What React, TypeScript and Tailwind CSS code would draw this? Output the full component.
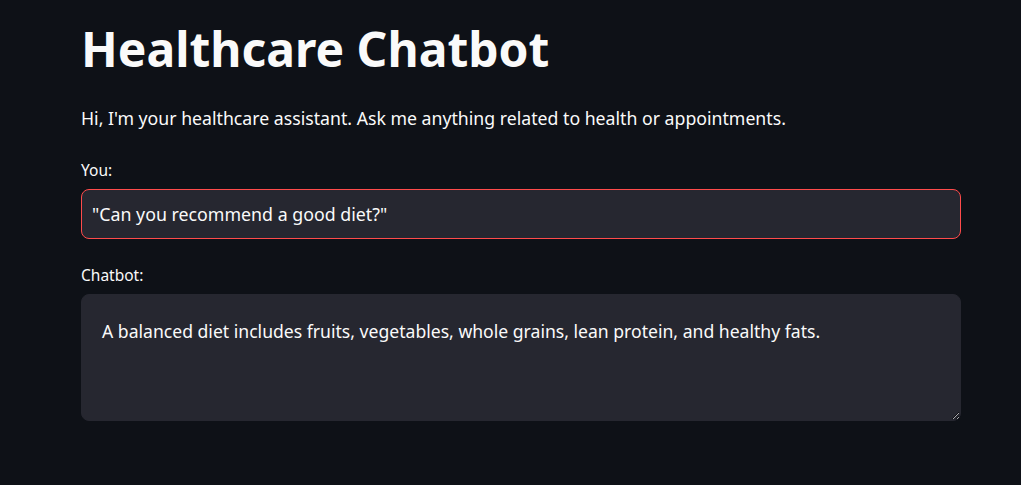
export default function App() {
  return (
    <div className="min-h-[485px] w-full bg-[#0e1117] text-[#fafafa] font-['Noto_Sans',sans-serif]">
      <div className="ml-[81px] w-[880px] pt-[20px]">
        <h1 className="text-[48px] font-bold leading-[58px]">Healthcare Chatbot</h1>

        <p className="mt-[26px] text-[17.7px] leading-[28px]">
          Hi, I'm your healthcare assistant. Ask me anything related to health or appointments.
        </p>

        <div className="mt-[28px] flex flex-col">
          <label className="text-[15.5px] leading-[20px] mb-[9px]">You:</label>
          <input
            readOnly
            value={'"Can you recommend a good diet?"'}
            className="h-[50px] w-full rounded-[8px] border border-[#ff4b4b] bg-[#262730] px-[10px] text-[17.8px] text-[#fafafa] outline-none"
          />
        </div>

        <div className="mt-[26px] flex flex-col">
          <label className="text-[15.5px] leading-[20px] mb-[9px]">Chatbot:</label>
          <textarea
            readOnly
            value="A balanced diet includes fruits, vegetables, whole grains, lean protein, and healthy fats."
            className="h-[127px] w-full resize-y rounded-[8px] border border-[#262730] bg-[#262730] px-[20px] pt-[23px] text-[17.6px] leading-[26px] text-[#fafafa] outline-none [color-scheme:dark]"
          />
        </div>
      </div>
    </div>
  );
}
